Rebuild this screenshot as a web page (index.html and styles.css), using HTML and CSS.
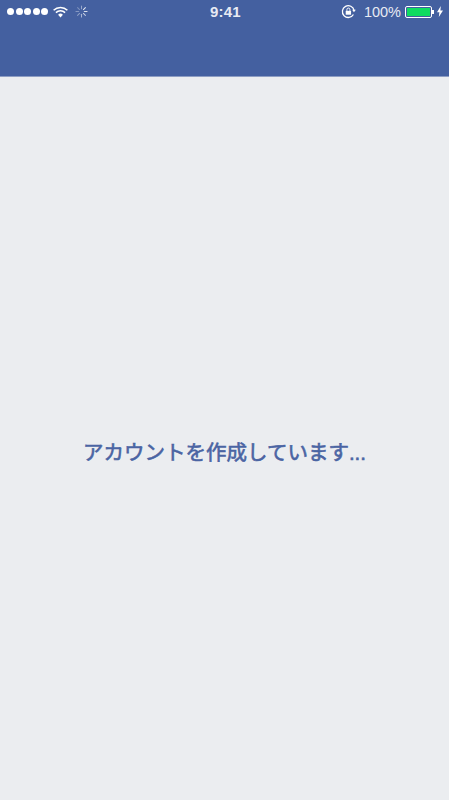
FILE: index.html
```html
<!DOCTYPE html>
<html>
  <head>
    <title>アカウントを作成しています</title>
    <link rel="stylesheet" href="styles.css">
  </head>
  <body>
    <div class="header">
      <div class="statusbar">
        <div class="status-left">
          <div class="signal">
            <span class="dot"></span>
            <span class="dot"></span>
            <span class="dot"></span>
            <span class="dot"></span>
            <span class="dot"></span>
          </div>
          <svg class="wifi" width="15" height="12" viewBox="0 0 15 12">
            <path d="M0.6 4.2a10 10 0 0 1 13.8 0" fill="none" stroke="#fff" stroke-width="1.5"/>
            <path d="M2.9 6.6a6.7 6.7 0 0 1 9.2 0" fill="none" stroke="#fff" stroke-width="1.5"/>
            <path d="M5.1 8.7a3.5 3.5 0 0 1 4.8 0L7.5 11.4z" fill="#fff"/>
          </svg>
          <svg class="spinner" width="13" height="13" viewBox="0 0 14 14" stroke="#fff" stroke-width="1.1" stroke-linecap="round">
            <path d="M7 1v3" opacity="0.45"/>
            <path d="M11.2 2.8L9.1 4.9" opacity="0.85"/>
            <path d="M13 7h-3" opacity="0.8"/>
            <path d="M11.2 11.2L9.1 9.1" opacity="0.7"/>
            <path d="M7 13v-3" opacity="0.55"/>
            <path d="M2.8 11.2l2.1-2.1" opacity="0.4"/>
            <path d="M1 7h3" opacity="0.35"/>
            <path d="M2.8 2.8l2.1 2.1" opacity="0.3"/>
          </svg>
        </div>
        <div class="clock">9:41</div>
        <div class="status-right">
          <svg class="lock" width="15" height="15" viewBox="0 0 14 14">
            <path d="M11.6 9.8A5.5 5.5 0 1 1 12.2 6" fill="none" stroke="#fff" stroke-width="1.2"/>
            <path d="M10.4 5.4h3.4l-1.7 2.2z" fill="#fff"/>
            <rect x="4.4" y="6.4" width="5" height="3.6" fill="#fff"/>
            <path d="M5.5 6.4V5.2a1.4 1.4 0 0 1 2.8 0v1.2" fill="none" stroke="#fff" stroke-width="0.9"/>
          </svg>
          <span class="percent">100%</span>
          <div class="battery">
            <div class="battery-body">
              <div class="battery-fill"></div>
            </div>
            <div class="battery-tip"></div>
          </div>
          <svg class="bolt" width="6" height="11" viewBox="0 0 6 11">
            <path d="M3.8 0L0 6.2h2.4L1.8 11 6 4.4H3.4z" fill="#fff"/>
          </svg>
        </div>
      </div>
    </div>
    <div class="content">
      <p class="message">アカウントを作成しています...</p>
    </div>
  </body>
</html>
```

FILE: styles.css
```css
* {
  box-sizing: border-box;
}

html,
body {
  height: 100%;
}

body {
  margin: 0;
  display: flex;
  flex-direction: column;
  background-color: #ebedf0;
  font-family: "Liberation Sans", "Noto Sans CJK JP", sans-serif;
}

.header {
  height: 77px;
  background-color: #4460a0;
  border-bottom: 1px solid #8d9dc3;
}

.statusbar {
  height: 23px;
  padding: 0 6px 0 7px;
  display: flex;
  align-items: center;
  justify-content: space-between;
  color: #fff;
}

.status-left,
.status-right {
  width: 130px;
  display: flex;
  align-items: center;
}

.status-right {
  justify-content: flex-end;
}

.signal {
  display: flex;
  gap: 1.5px;
}

.dot {
  width: 7px;
  height: 7px;
  border-radius: 50%;
  background-color: #fff;
}

.wifi {
  margin-left: 5px;
}

.spinner {
  margin-left: 7px;
}

.clock {
  font-size: 15px;
  font-weight: bold;
  letter-spacing: 0.2px;
  color: #e8ebf3;
  margin-left: 1px;
}

.percent {
  margin-left: 8px;
  font-size: 14.5px;
  color: #e8ebf3;
}

.battery {
  margin-left: 4px;
  display: flex;
  align-items: center;
}

.battery-body {
  width: 27px;
  height: 12px;
  padding: 1px;
  border: 1px solid #fff;
  border-radius: 2px;
}

.battery-fill {
  height: 100%;
  background-color: #0fdc60;
}

.battery-tip {
  width: 2px;
  height: 4px;
  background-color: #fff;
}

.bolt {
  margin-left: 3px;
}

.content {
  flex: 1;
  display: flex;
  justify-content: center;
  padding-top: 362px;
}

.message {
  margin: 0;
  font-size: 20.5px;
  line-height: 28px;
  font-weight: normal;
  -webkit-text-stroke: 0.6px #4a64a3;
  color: #4a64a3;
}
```
